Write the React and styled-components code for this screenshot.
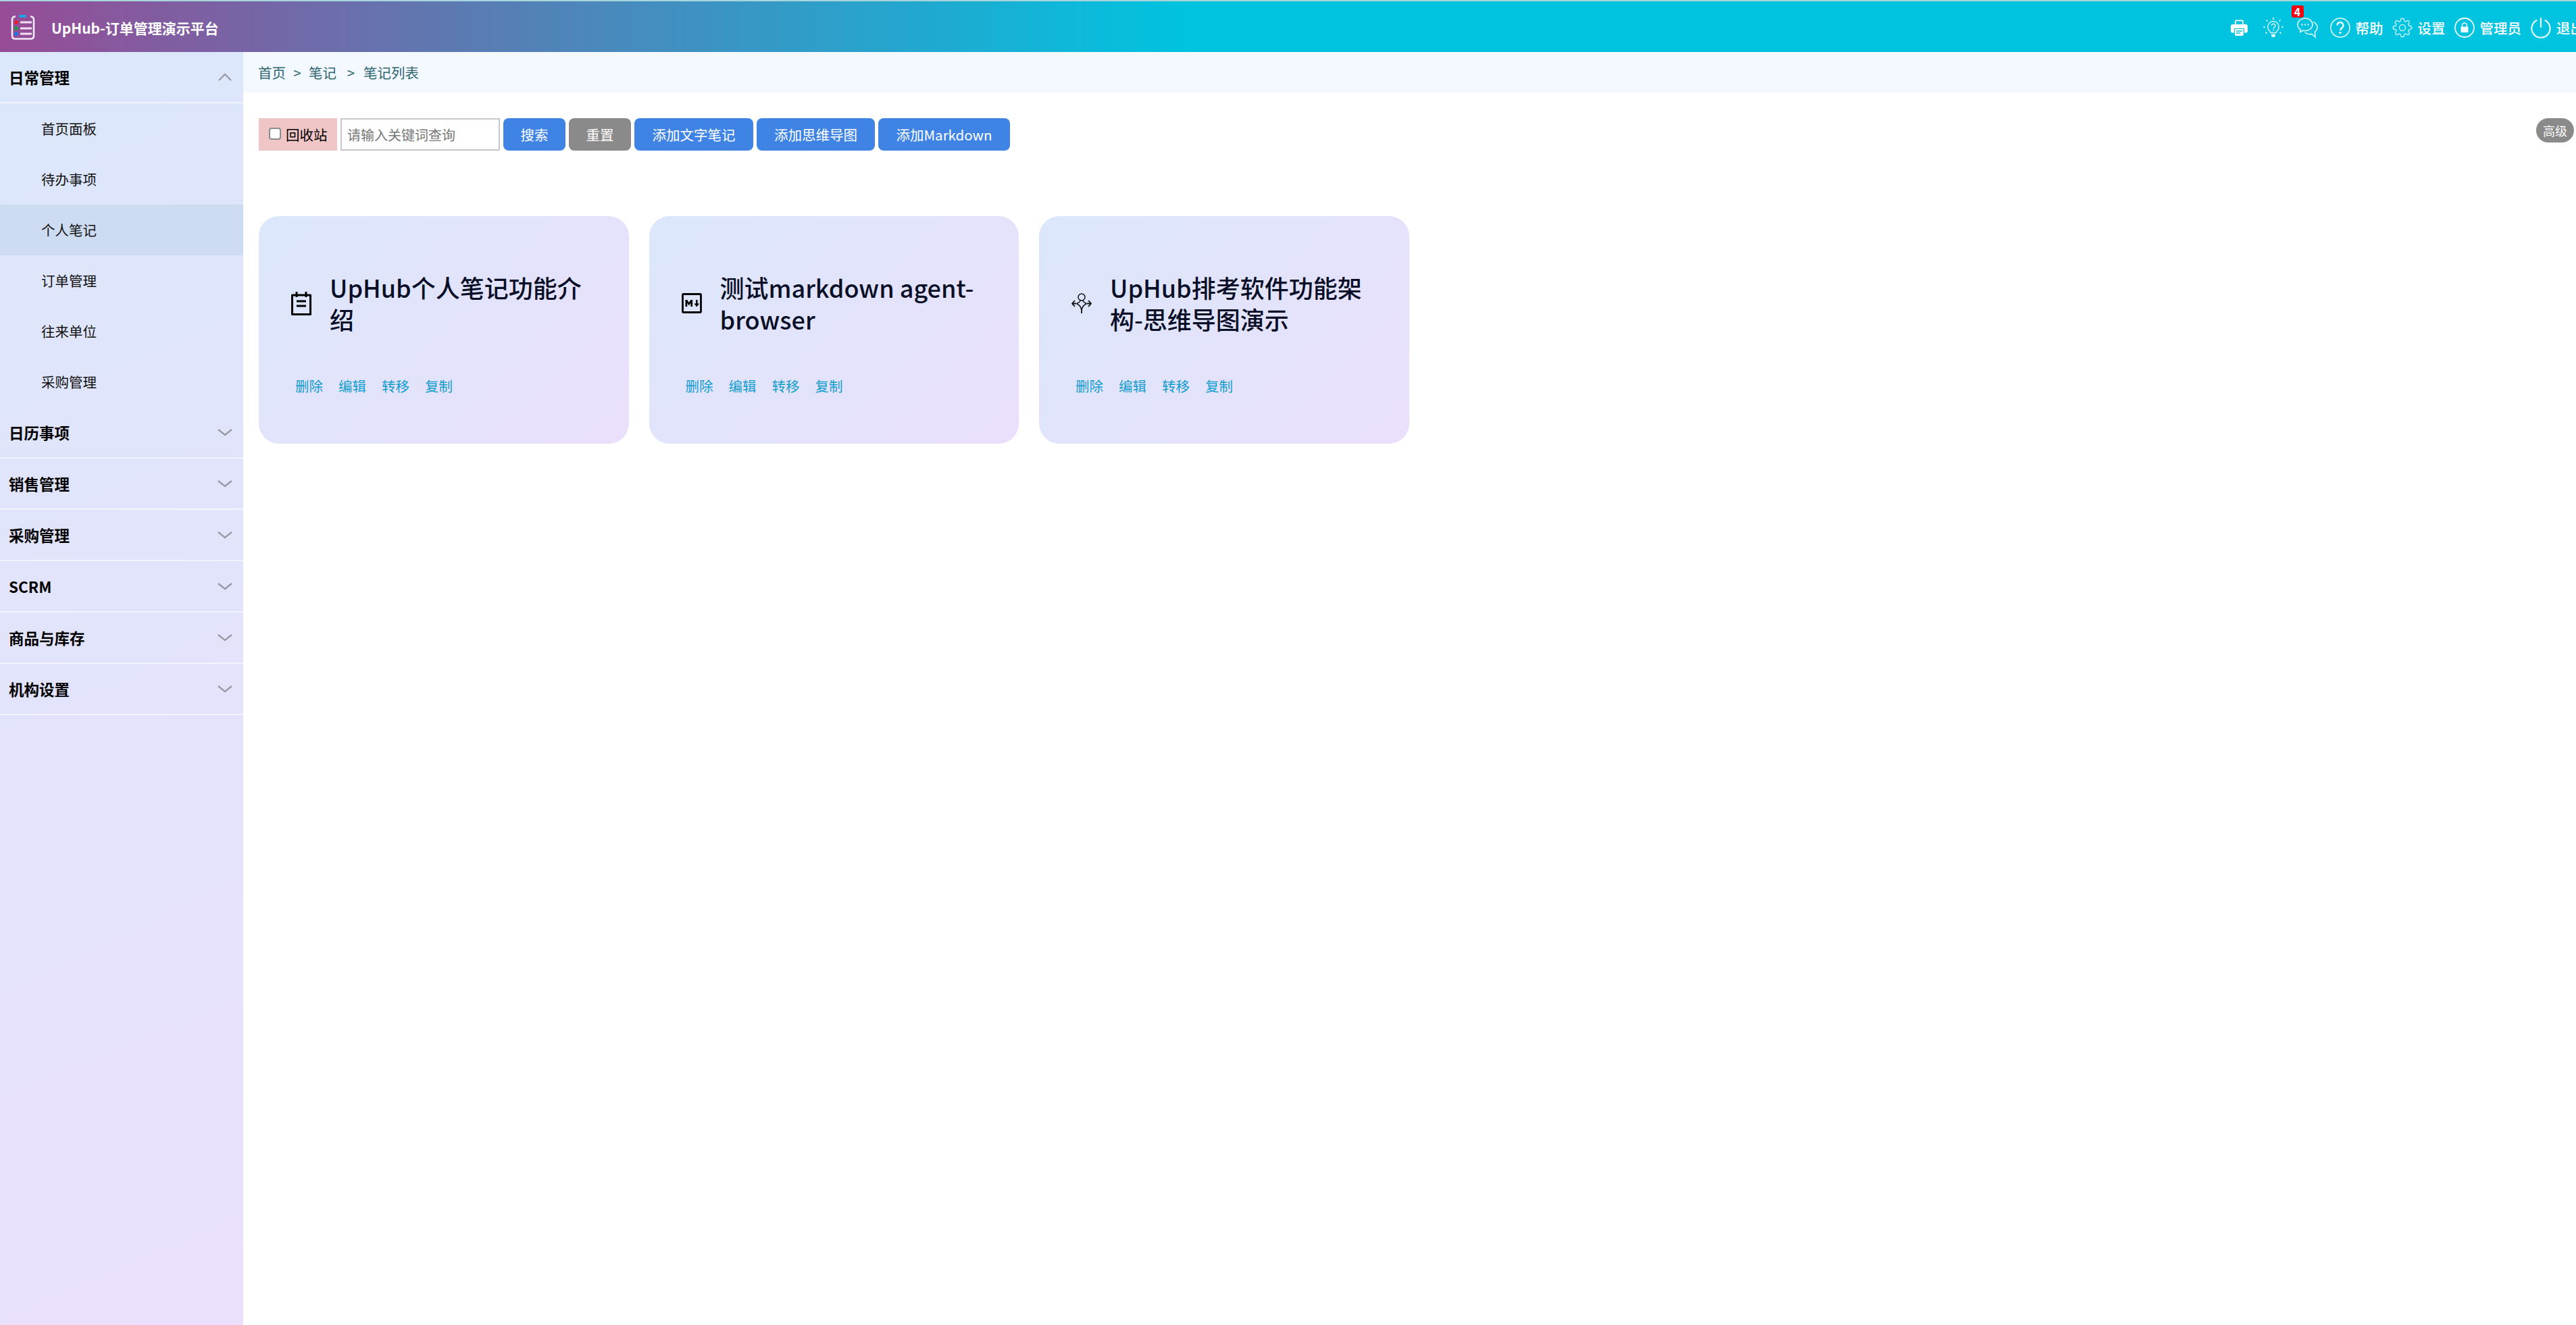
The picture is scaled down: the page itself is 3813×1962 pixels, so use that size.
import React from "react";
import styled, { createGlobalStyle } from "styled-components";

const FONT = '"Noto Sans CJK SC", "Noto Sans", sans-serif';

const GlobalStyle = createGlobalStyle`
  html, body {
    margin: 0;
    padding: 0;
    height: 100%;
    overflow: hidden;
    background: #ffffff;
    font-family: ${FONT};
  }
  * {
    box-sizing: border-box;
  }
`;

const Page = styled.div`
  width: 3813px;
  height: 1962px;
  display: flex;
  flex-direction: column;
  overflow: hidden;
`;

const Header = styled.header`
  height: 77px;
  flex: none;
  display: flex;
  align-items: center;
  padding: 2px 0 0 16px;
  border-top: 2px solid #a8d4dc;
  background: linear-gradient(90deg, #964c96 0%, #00c3e0 46%, #00c3e0 100%);
  color: #ffffff;
`;

const Logo = styled.svg`
  width: 36px;
  height: 38px;
  flex: none;
`;

const Brand = styled.div`
  margin-left: 24px;
  font-size: 21px;
  font-weight: 700;
  white-space: nowrap;
`;

const HeaderRight = styled.nav`
  margin-left: auto;
  margin-right: -12px;
  display: flex;
  align-items: center;
  height: 100%;
`;

const HeaderIcon = styled.span`
  position: relative;
  width: ${(p) => p.$w || 30}px;
  height: 30px;
  margin-left: ${(p) => p.$gap}px;
  flex: none;
  display: flex;
  align-items: center;
  justify-content: center;

  svg {
    display: block;
    overflow: visible;
  }
`;

const HeaderText = styled.span`
  margin-left: 8px;
  font-size: 20.5px;
  font-weight: 500;
  white-space: nowrap;
`;

const Badge = styled.span`
  position: absolute;
  left: -8px;
  top: -18px;
  width: 18px;
  height: 18px;
  border-radius: 3px;
  background: #f5000f;
  color: #ffffff;
  font-size: 16px;
  font-weight: 700;
  line-height: 18px;
  text-align: center;
`;

const Body = styled.div`
  flex: 1;
  display: flex;
  min-height: 0;
`;

const Sidebar = styled.aside`
  width: 360px;
  flex: none;
  background: linear-gradient(155deg, #dbe7fb 0%, #eadffc 100%);
`;

const GroupHead = styled.div`
  height: 76px;
  display: flex;
  align-items: center;
  justify-content: space-between;
  padding: 0 15px 0 13px;
  border-bottom: 2px solid rgba(255, 255, 255, 0.6);
  font-size: 22.5px;
  font-weight: 700;
  color: #000000;
`;

const SideItem = styled.div`
  height: 75px;
  display: flex;
  align-items: center;
  padding: 0 0 2px 61px;
  font-size: 20.5px;
  color: #111111;
  background: ${(p) => (p.$active ? "#cddcf3" : "transparent")};
`;

const Main = styled.main`
  flex: 1;
  min-width: 0;
  display: flex;
  flex-direction: column;
`;

const Crumbs = styled.div`
  height: 60px;
  display: flex;
  align-items: center;
  padding-left: 22px;
  background: #f4f8ff;
  color: #2e6670;
  font-size: 20.5px;
`;

const CrumbSep = styled.span`
  width: ${(p) => p.$w}px;
  padding-left: ${(p) => p.$pad || 0}px;
  text-align: center;
`;

const Toolbar = styled.div`
  position: relative;
  display: flex;
  gap: 5px;
  height: 48px;
  margin: 38px 0 0 23px;
`;

const Recycle = styled.label`
  width: 116px;
  display: flex;
  align-items: center;
  padding-left: 15px;
  gap: 7px;
  background: #efc5c6;
  color: #000000;
  font-size: 20.5px;
`;

const Check = styled.input`
  appearance: none;
  width: 18px;
  height: 18px;
  margin: 0 0 2px;
  border: 2px solid #8a8a8a;
  border-radius: 4px;
  background: #ffffff;
`;

const Search = styled.input`
  width: 236px;
  padding: 0 8px;
  border: 2px solid #c8c8c8;
  outline: none;
  background: #ffffff;
  font-family: ${FONT};
  font-size: 20px;
  color: #333333;

  &::placeholder {
    color: #777777;
  }
`;

const Button = styled.button`
  width: ${(p) => p.$w}px;
  border: none;
  border-radius: 8px;
  padding: 0;
  background: ${(p) => p.$bg || "#3f84e5"};
  color: #ffffff;
  font-family: ${FONT};
  font-size: 20.5px;
  white-space: nowrap;
`;

const Advanced = styled.span`
  position: absolute;
  top: 0;
  left: 3371px;
  width: 56px;
  height: 36px;
  border-radius: 18px;
  background: #8a8a8a;
  color: #ffffff;
  font-size: 18px;
  line-height: 36px;
  text-align: center;
`;

const CardGrid = styled.section`
  display: flex;
  gap: 30px;
  margin: 97px 0 0 23px;
`;

const Card = styled.article`
  width: 547.5px;
  height: 337px;
  padding: 82px 30px 0 48px;
  border-radius: 30px;
  background: linear-gradient(135deg, #dbe7fb 0%, #eadffc 100%);
`;

const CardHead = styled.div`
  display: flex;
  align-items: center;
  height: 94px;
`;

const CardIcon = styled.span`
  width: 30px;
  height: 36px;
  flex: none;
  display: flex;
  align-items: center;
  justify-content: center;
  color: #000000;
`;

const CardTitle = styled.h3`
  width: 392px;
  margin: 0 0 0 27px;
  font-size: 36px;
  font-weight: 500;
  line-height: 47px;
  color: #0a0f28;
`;

const CardActions = styled.div`
  display: flex;
  gap: 23px;
  margin: 61px 0 0 6px;
  font-size: 20.5px;
  line-height: 28px;
  color: #149dcf;
`;

const Chevron = ({ up }) => (
  <svg width="24" height="14" viewBox="0 0 24 14" fill="none" stroke="#9a9aa4" strokeWidth="2.4">
    <path d={up ? "M3 12 12 3l9 9" : "M2 3l10 8 10-8"} />
  </svg>
);

const LogoIcon = () => (
  <Logo viewBox="0 0 36 38" fill="none">
    <path d="M7 2.5C3.5 2.5 2 4 2 7v24c0 3 1.500 4.500 4.500 4.500h23c3 0 4.500-1.500 4.500-4.500V7c0-3-1.500-4.500-5-4.500" stroke="#f3e8f5" strokeWidth="2.6" />
    <rect x="12" y="0" width="11" height="4" rx="2" fill="#1ba6e6" />
    <circle cx="8" cy="11" r="2.800" fill="#ee1c25" />
    <circle cx="8" cy="20" r="2.800" fill="#14a03c" />
    <circle cx="8" cy="28" r="2.800" fill="#1a73e8" />
    <path d="M14 11h17M14 20h17M14 28h17" stroke="#f0e2f2" strokeWidth="3" />
  </Logo>
);

const PrinterIcon = () => (
  <svg width="25" height="24" viewBox="0 0 25 24">
    <path d="M6 7V3a2.500 2.500 0 0 1 2.500-2.500h8A2.500 2.500 0 0 1 19 3v4h-1.800V3.200c0-.6-.4-1-1-1H8.800c-.6 0-1 .4-1 1V7z" fill="#fff" />
    <path d="M3 7h19a3 3 0 0 1 3 3v7a2.500 2.500 0 0 1-2.500 2.500H20V13H5v6.500H2.500A2.500 2.500 0 0 1 0 17v-7a3 3 0 0 1 3-3z" fill="#fff" />
    <path d="M6 14h13v8a2 2 0 0 1-2 2H8a2 2 0 0 1-2-2z" fill="#fff" />
    <path d="M8 17h9M8 20h6" stroke="#00c3e0" strokeWidth="1.400" />
  </svg>
);

const BulbIcon = () => (
  <svg width="30" height="30" viewBox="0 0 30 30" fill="none" stroke="#d9f6fa" strokeWidth="1.400">
    <path d="M10.500 20.500C8 18.800 6.800 16.400 6.800 13.700a8.200 8.200 0 0 1 16.400 0c0 2.700-1.200 5.100-3.700 6.800v2h-9z" />
    <path d="M12 24.500h6v2.500a2 2 0 0 1-2 2h-2a2 2 0 0 1-2-2z" fill="#d9f6fa" stroke="none" />
    <path d="M12.300 12a2.800 2.800 0 1 1 4.400 2.300c-1 .7-1.700 1.200-1.700 2.400M15 18v1.600" strokeWidth="1.500" />
    <path d="M15 0v3M4.500 3.500l2 2M25.500 3.500l-2 2M0 14h3M27 14h3M3.500 23.500l2-1.800M26.500 23.500l-2-1.800" strokeWidth="1.700" />
  </svg>
);

const ChatIcon = () => (
  <svg width="31" height="30" viewBox="0 0 31 30" fill="none" stroke="#d9f6fa" strokeWidth="1.600">
    <path d="M12 1C5.800 1 1 5.200 1 10.500c0 3.100 1.700 5.800 4.300 7.500l-.4 3.500 3.800-2.300c1 .2 2.100.3 3.300.3 6.200 0 11-4.200 11-9S18.200 1 12 1z" />
    <path d="M24 6.500c3.600 1.500 6 4.500 6 8 0 2.600-1.300 5-3.500 6.500l.5 8-4.800-4.600c-.9.200-1.700.3-2.700.3-3.200 0-6-1.200-7.800-3.200" />
    <circle cx="7.500" cy="10.500" r="1.200" fill="#d9f6fa" stroke="none" />
    <circle cx="12" cy="10.500" r="1.200" fill="#d9f6fa" stroke="none" />
    <circle cx="16.500" cy="10.500" r="1.200" fill="#d9f6fa" stroke="none" />
  </svg>
);

const HelpIcon = () => (
  <svg width="30" height="30" viewBox="0 0 30 30" fill="none" stroke="#e6fafc">
    <circle cx="15" cy="15" r="14" strokeWidth="1.600" />
    <path d="M10.500 11.500a4.500 4.500 0 1 1 7.200 3.600c-1.600 1.100-2.700 1.900-2.700 3.900" strokeWidth="2.600" />
    <circle cx="15" cy="22.500" r="1.700" fill="#e6fafc" stroke="none" />
  </svg>
);

const GearIcon = () => (
  <svg width="30" height="30" viewBox="0 0 24 24" fill="none" stroke="#b9eef5" strokeWidth="1.250" strokeLinejoin="round">
    <circle cx="12" cy="12" r="3.600" />
    <path d="M19.400 15a1.650 1.650 0 0 0 .33 1.820l.06.06a2 2 0 1 1-2.830 2.830l-.06-.06a1.650 1.650 0 0 0-1.820-.33 1.650 1.650 0 0 0-1 1.510V21a2 2 0 0 1-4 0v-.09A1.650 1.650 0 0 0 9 19.400a1.650 1.650 0 0 0-1.820.33l-.06.06a2 2 0 1 1-2.830-2.830l.06-.06a1.650 1.650 0 0 0 .33-1.820 1.650 1.650 0 0 0-1.510-1H3a2 2 0 0 1 0-4h.09A1.650 1.650 0 0 0 4.600 9a1.650 1.650 0 0 0-.33-1.820l-.06-.06a2 2 0 1 1 2.830-2.830l.06.06a1.650 1.650 0 0 0 1.820.33H9a1.650 1.650 0 0 0 1-1.510V3a2 2 0 0 1 4 0v.09a1.650 1.650 0 0 0 1 1.510 1.650 1.650 0 0 0 1.820-.33l.06-.06a2 2 0 1 1 2.830 2.830l-.06.06a1.650 1.650 0 0 0-.33 1.820V9a1.650 1.650 0 0 0 1.510 1H21a2 2 0 0 1 0 4h-.09a1.650 1.650 0 0 0-1.510 1z" />
  </svg>
);

const LockIcon = () => (
  <svg width="30" height="30" viewBox="0 0 30 30" fill="none" stroke="#f0fcfd">
    <circle cx="15" cy="15" r="14" strokeWidth="1.800" />
    <path d="M11.500 14v-2.500a3.500 3.500 0 0 1 7 0V14" strokeWidth="1.600" />
    <rect x="9.500" y="13.500" width="11" height="8.500" rx="1" fill="#f0fcfd" stroke="none" />
  </svg>
);

const PowerIcon = () => (
  <svg width="30" height="30" viewBox="0 0 30 30" fill="none" stroke="#e6fafc" strokeWidth="2.200" strokeLinecap="round">
    <path d="M8.500 4.200A13.600 13.600 0 1 0 21.500 4.200" />
    <path d="M15 1v13" />
  </svg>
);

const NoteIcon = () => (
  <svg width="30" height="36" viewBox="0 0 30 36" fill="none" stroke="#000" strokeWidth="3">
    <path d="M1.500 6h27v28.500h-27z" strokeLinejoin="round" />
    <path d="M8 1v8M22 1v8M8 15h14M8 22h14" />
  </svg>
);

const MarkdownIcon = () => (
  <svg width="30" height="30" viewBox="0 0 30 30">
    <rect x="1.500" y="1.500" width="27" height="27" rx="1" fill="none" stroke="#000" strokeWidth="2.800" />
    <path d="M5.500 20V10h2.700l2.600 4 2.600-4h2.700v10h-2.800v-5.400l-2.500 3.800-2.500-3.800V20z" fill="#000" />
    <path d="M21 10h2.600v5.500h2.600l-3.900 5-3.900-5H21z" fill="#000" />
  </svg>
);

const MindIcon = () => (
  <svg width="30" height="30" viewBox="0 0 30 30" fill="none" stroke="#111" strokeWidth="1.500">
    <circle cx="15" cy="6" r="5" />
    <path d="M7.500 15.500c3 -1 5 -2.500 6 -5M22.500 15.500c-3 -1 -5 -2.500 -6 -5M7.500 15.500c3.500 1.500 6.500 5 7.500 9.500c1 -4.500 4 -8 7.500 -9.500" />
    <path d="M15 24v6" strokeWidth="1.800" />
    <path d="M5 11l-4 4.500 4 4.500M1 15.500h6M25 11l4 4.500-4 4.500M29 15.500h-6" strokeWidth="1.800" />
  </svg>
);

const groupsAfter = ["日历事项", "销售管理", "采购管理", "SCRM", "商品与库存", "机构设置"];
const dailyItems = ["首页面板", "待办事项", "个人笔记", "订单管理", "往来单位", "采购管理"];

const notes = [
  { id: 1, title: "UpHub个人笔记功能介绍", icon: <NoteIcon /> },
  { id: 2, title: "测试markdown agent-browser", icon: <MarkdownIcon /> },
  { id: 3, title: "UpHub排考软件功能架构-思维导图演示", icon: <MindIcon /> },
];

export default function App() {
  return (
    <Page>
      <GlobalStyle />
      <Header>
        <LogoIcon />
        <Brand>UpHub-订单管理演示平台</Brand>
        <HeaderRight>
          <HeaderIcon $w={25} $gap={0}><PrinterIcon /></HeaderIcon>
          <HeaderIcon $gap={23}><BulbIcon /></HeaderIcon>
          <HeaderIcon $w={31} $gap={20}>
            <Badge>4</Badge>
            <ChatIcon />
          </HeaderIcon>
          <HeaderIcon $gap={18}><HelpIcon /></HeaderIcon>
          <HeaderText>帮助</HeaderText>
          <HeaderIcon $gap={13}><GearIcon /></HeaderIcon>
          <HeaderText>设置</HeaderText>
          <HeaderIcon $gap={13}><LockIcon /></HeaderIcon>
          <HeaderText>管理员</HeaderText>
          <HeaderIcon $gap={14}><PowerIcon /></HeaderIcon>
          <HeaderText>退出</HeaderText>
        </HeaderRight>
      </Header>
      <Body>
        <Sidebar>
          <GroupHead>
            日常管理
            <Chevron up />
          </GroupHead>
          {dailyItems.map((name) => (
            <SideItem key={name} $active={name === "个人笔记"}>{name}</SideItem>
          ))}
          {groupsAfter.map((name) => (
            <GroupHead key={name}>
              {name}
              <Chevron />
            </GroupHead>
          ))}
        </Sidebar>
        <Main>
          <Crumbs>
            首页
            <CrumbSep $w={34}>&gt;</CrumbSep>
            笔记
            <CrumbSep $w={40} $pad={3}>&gt;</CrumbSep>
            笔记列表
          </Crumbs>
          <Toolbar>
            <Recycle>
              <Check type="checkbox" />
              回收站
            </Recycle>
            <Search placeholder="请输入关键词查询" />
            <Button $w={92}>搜索</Button>
            <Button $w={92} $bg="#8a8a8a">重置</Button>
            <Button $w={176}>添加文字笔记</Button>
            <Button $w={175}>添加思维导图</Button>
            <Button $w={195}>添加Markdown</Button>
            <Advanced>高级</Advanced>
          </Toolbar>
          <CardGrid>
            {notes.map((note) => (
              <Card key={note.id}>
                <CardHead>
                  <CardIcon>{note.icon}</CardIcon>
                  <CardTitle>{note.title}</CardTitle>
                </CardHead>
                <CardActions>
                  <span>删除</span>
                  <span>编辑</span>
                  <span>转移</span>
                  <span>复制</span>
                </CardActions>
              </Card>
            ))}
          </CardGrid>
        </Main>
      </Body>
    </Page>
  );
}
